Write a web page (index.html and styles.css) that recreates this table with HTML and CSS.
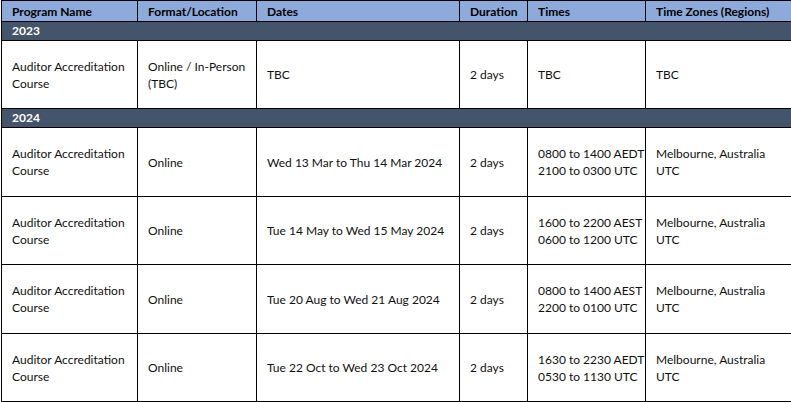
FILE: index.html
```html
<!DOCTYPE html>
<html>
<head>
<meta charset="utf-8">
<link rel="stylesheet" href="styles.css">
</head>
<body>
<table class="sched">
  <colgroup>
    <col class="c1"><col class="c2"><col class="c3"><col class="c4"><col class="c5"><col class="c6">
  </colgroup>
  <thead>
    <tr class="head">
      <th>Program Name</th><th>Format/Location</th><th>Dates</th><th>Duration</th><th>Times</th><th>Time Zones (Regions)</th>
    </tr>
  </thead>
  <tbody>
    <tr class="year"><td colspan="6">2023</td></tr>
    <tr class="row a">
      <td>Auditor Accreditation<br>Course</td><td>Online / In-Person<br>(TBC)</td><td>TBC</td><td>2 days</td><td>TBC</td><td>TBC</td>
    </tr>
    <tr class="year"><td colspan="6">2024</td></tr>
    <tr class="row b">
      <td>Auditor Accreditation<br>Course</td><td>Online</td><td>Wed 13 Mar to Thu 14 Mar 2024</td><td>2 days</td><td>0800 to 1400 AEDT<br>2100 to 0300 UTC</td><td>Melbourne, Australia<br>UTC</td>
    </tr>
    <tr class="row a">
      <td>Auditor Accreditation<br>Course</td><td>Online</td><td>Tue 14 May to Wed 15 May 2024</td><td>2 days</td><td>1600 to 2200 AEST<br>0600 to 1200 UTC</td><td>Melbourne, Australia<br>UTC</td>
    </tr>
    <tr class="row b">
      <td>Auditor Accreditation<br>Course</td><td>Online</td><td>Tue 20 Aug to Wed 21 Aug 2024</td><td>2 days</td><td>0800 to 1400 AEST<br>2200 to 0100 UTC</td><td>Melbourne, Australia<br>UTC</td>
    </tr>
    <tr class="row a">
      <td>Auditor Accreditation<br>Course</td><td>Online</td><td>Tue 22 Oct to Wed 23 Oct 2024</td><td>2 days</td><td>1630 to 2230 AEDT<br>0530 to 1130 UTC</td><td>Melbourne, Australia<br>UTC</td>
    </tr>
  </tbody>
</table>
</body>
</html>
```

FILE: styles.css
```css
html, body {
  margin: 0;
  padding: 0;
  background: #ffffff;
}
body {
  padding-left: 1px;
  font-family: Lato, "Open Sans", "Liberation Sans", sans-serif;
  font-size: 12px;
  color: #111111;
}
.sched {
  border-collapse: collapse;
  table-layout: fixed;
  width: 790px;
}
.c1 { width: 136px; }
.c2 { width: 119px; }
.c3 { width: 203px; }
.c4 { width: 68px; }
.c5 { width: 118px; }
.c6 { width: 146px; }
.sched th, .sched td {
  border: 1px solid #000;
  padding: 0 0 0 10px;
  text-align: left;
  vertical-align: middle;
  line-height: 17px;
  white-space: nowrap;
  overflow: hidden;
}
.head th {
  background: #8eaadb;
  font-weight: 700;
  height: 20px;
  color: #000;
}
.year td {
  background: #44546a;
  color: #fff;
  font-weight: 700;
  height: 18px;
  line-height: 16px;
}
.row.a td { height: 67px; }
.row.b td { height: 68px; }
```
